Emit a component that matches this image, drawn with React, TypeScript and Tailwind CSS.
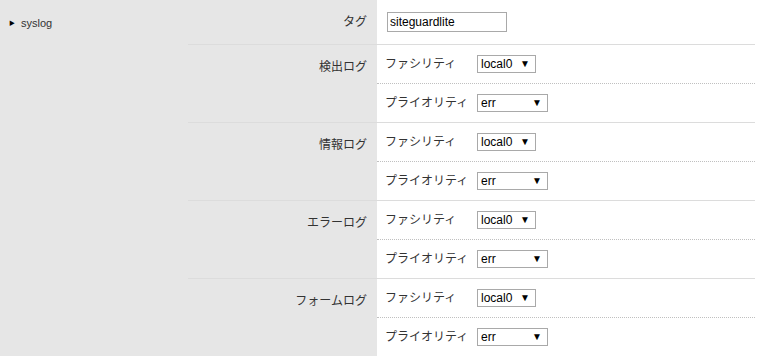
import React from "react";

const groups = ["検出ログ", "情報ログ", "エラーログ", "フォームログ"];

function FakeSelect({ value, width }: { value: string; width: string }) {
  return (
    <div className={`relative h-[18px] ${width}`}>
      <select
        defaultValue={value}
        className="h-full w-full appearance-none rounded-none border border-[#a9a9a9] bg-white pl-[3px] text-[12px] leading-[16px] text-black outline-none"
      >
        <option>{value}</option>
      </select>
      <span className="pointer-events-none absolute right-[6px] top-[3px] text-[10px] leading-[11px] text-black">▼</span>
    </div>
  );
}

export default function App() {
  return (
    <div
      className="flex h-[356px] w-[763px] overflow-hidden bg-white text-[12px] text-[#333]"
      style={{ fontFamily: '"Liberation Sans", "Noto Sans CJK JP", sans-serif' }}
    >
      <aside className="w-[188px] shrink-0 bg-[#e6e6e6] pt-[15px] pl-[9px]">
        <div className="flex items-center gap-[6px]">
          <span className="text-[6px] leading-none text-black">▶</span>
          <span className="text-[11px] text-[#333]">syslog</span>
        </div>
      </aside>

      <main className="flex flex-1 flex-col pr-[8px]">
        <div className="flex h-[44px]">
          <div className="flex w-[189px] shrink-0 items-center justify-end bg-[#e6e6e6] pr-[10px]">タグ</div>
          <div className="flex flex-1 items-center pl-[10px]">
            <input
              defaultValue="siteguardlite"
              className="h-[20px] w-[120px] border border-[#a9a9a9] px-[2px] text-[12px] text-black outline-none"
            />
          </div>
        </div>

        {groups.map((g) => (
          <div key={g} className="flex h-[78px] border-t border-[#dcdcdc]">
            <div className="flex w-[189px] shrink-0 justify-end bg-[#e6e6e6] pr-[10px] pt-[13px]">{g}</div>
            <div className="flex flex-1 flex-col">
              <div className="flex h-[39px] items-center border-b border-dotted border-[#c0c0c0] pl-[8px]">
                <span className="w-[92px]">ファシリティ</span>
                <FakeSelect value="local0" width="w-[59px]" />
              </div>
              <div className="flex h-[38px] items-center pl-[8px]">
                <span className="w-[92px]">プライオリティ</span>
                <FakeSelect value="err" width="w-[71px]" />
              </div>
            </div>
          </div>
        ))}
      </main>
    </div>
  );
}
